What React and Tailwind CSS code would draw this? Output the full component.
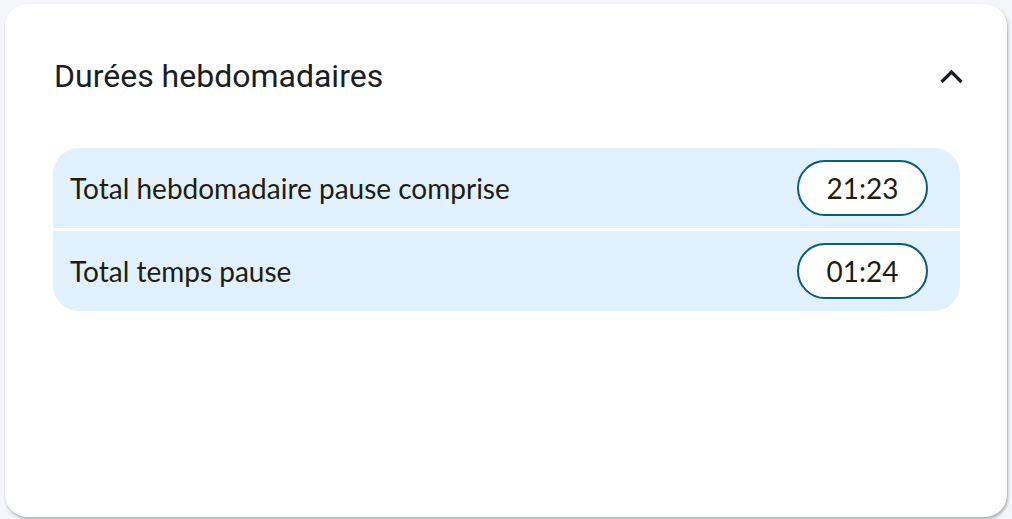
export default function App() {
  const rows = [
    { label: "Total hebdomadaire pause comprise", value: "21:23" },
    { label: "Total temps pause", value: "01:24" },
  ];
  return (
    <div className="w-[1012px] h-[519px] bg-[#f3f5f9] pt-[4px] pl-[5px] pr-[5px] pb-[2px]">
      <div className="h-[513px] bg-white rounded-[22px] shadow-[1px_2px_3px_rgba(0,0,0,0.3)] px-[48px] flex flex-col">
        <div className="flex items-center justify-between h-[72px] mt-[36px]">
          <h2 className="text-[32px] font-normal text-[#1a1d21] font-['Roboto',sans-serif] ml-[1px]">
            Durées hebdomadaires
          </h2>
          <svg width="23" height="17" viewBox="0 0 23 17" className="mr-[-4px]">
            <path d="M1.5 14 L11.5 4 L21.5 14" fill="none" stroke="#1a1d21" strokeWidth="3.2" />
          </svg>
        </div>
        <div className="mt-[36px] flex flex-col gap-[3px] rounded-[26px] overflow-hidden w-[907px]">
          {rows.map((r) => (
            <div key={r.label} className="h-[80px] bg-[#e0f1fd] flex items-center justify-between pl-[17px] pr-[32px]">
              <span className="text-[28px] text-[#231c0c] font-['Lato',sans-serif]">{r.label}</span>
              <span className="w-[131px] h-[56px] rounded-full border-2 border-[#0b5c78] bg-white flex items-center justify-center text-[28px] text-[#231c0c] font-['Lato',sans-serif]">
                {r.value}
              </span>
            </div>
          ))}
        </div>
      </div>
    </div>
  );
}
